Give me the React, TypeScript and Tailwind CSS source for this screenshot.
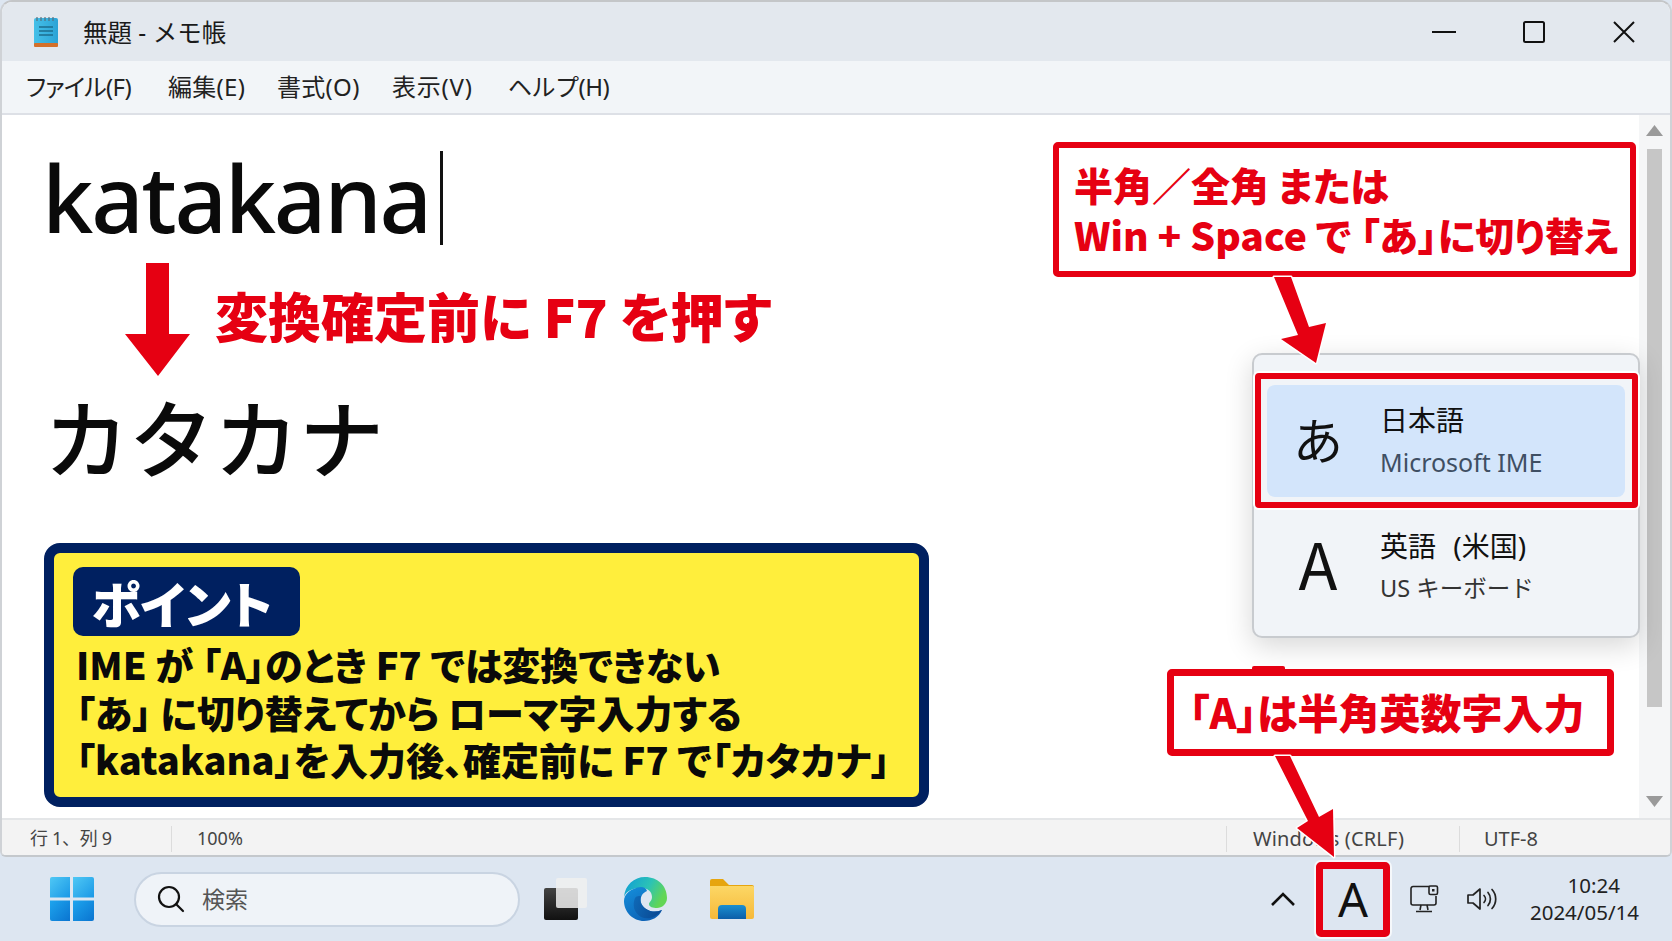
import React from "react";

const JP = "font-['Noto_Sans','Noto_Sans_CJK_JP',sans-serif]";
const HEAVY = "font-['Noto_Sans_CJK_JP','Noto_Sans',sans-serif] font-black [font-feature-settings:'palt']";

function NotepadIcon() {
  return (
    <svg width="26" height="32" viewBox="0 0 26 32">
      <defs>
        <linearGradient id="np" x1="0" y1="0" x2="1" y2="0">
          <stop offset="0" stopColor="#45c0e8" />
          <stop offset="1" stopColor="#2ba3d6" />
        </linearGradient>
      </defs>
      <rect x="1" y="2" width="24" height="28" rx="2" fill="url(#np)" />
      <rect x="1" y="27" width="24" height="4" rx="1" fill="#d4702a" />
      <path d="M4 1v4M8 1v4M12 1v4M16 1v4M20 1v4" stroke="#55707f" strokeWidth="1.2" />
      <path d="M6 11h14M6 15h14M6 19h14" stroke="#1c6d8f" strokeWidth="1.6" />
    </svg>
  );
}

function WinLogo() {
  return (
    <svg width="44" height="44" viewBox="0 0 44 44">
      <defs>
        <linearGradient id="w1" x1="0" y1="0" x2="1" y2="1">
          <stop offset="0" stopColor="#4fc8f5" />
          <stop offset="1" stopColor="#1a98e6" />
        </linearGradient>
        <linearGradient id="w2" x1="0" y1="0" x2="1" y2="1">
          <stop offset="0" stopColor="#1ea5ee" />
          <stop offset="1" stopColor="#0a74d0" />
        </linearGradient>
      </defs>
      <path d="M2 0h18v20.500H0V2a2 2 0 0 1 2-2z" fill="url(#w1)" />
      <path d="M23 0h19a2 2 0 0 1 2 2v18.500H23z" fill="url(#w1)" />
      <path d="M0 23.500h20V44H2a2 2 0 0 1-2-2z" fill="url(#w2)" />
      <path d="M23 23.500h21V42a2 2 0 0 1-2 2H23z" fill="url(#w2)" />
    </svg>
  );
}

function EdgeLogo() {
  return (
    <svg width="46" height="46" viewBox="0 0 46 46">
      <defs>
        <linearGradient id="e1" x1="0" y1="0" x2="1" y2="0.4">
          <stop offset="0" stopColor="#0d9bd9" />
          <stop offset="0.6" stopColor="#2cc3b5" />
          <stop offset="1" stopColor="#62d655" />
        </linearGradient>
        <linearGradient id="e2" x1="0" y1="0" x2="0.7" y2="1">
          <stop offset="0" stopColor="#1590dc" />
          <stop offset="1" stopColor="#0c5fb3" />
        </linearGradient>
        <linearGradient id="e3" x1="0" y1="0" x2="1" y2="0.3">
          <stop offset="0" stopColor="#0f6ab8" />
          <stop offset="1" stopColor="#0a4a94" />
        </linearGradient>
      </defs>
      <path d="M2 21C3 9 12 1 23 1c13 0 22 9 22 21 0 6-5 10-10 10-4 0-8-1-8-4 0-2 3-3 3-7 0-6-5-9-11-9-8 0-15 3-17 9z" fill="url(#e1)" />
      <path d="M19 11C9 12 2 18 2 25c0 11 9 20 20 20 8 0 15-4 18-11-5 2-10 2-14 0-7-3-9-10-6-15 1-2 3-3 5-4-1-3-3-4-6-4z" fill="url(#e2)" />
      <path d="M13 22c-3 7-1 15 6 19 7 3 15 1 21-7-5 2-10 2-14 0-6-3-9-8-7-14-2 0-5 0-6 2z" fill="url(#e3)" />
    </svg>
  );
}

function FolderIcon() {
  return (
    <svg width="46" height="42" viewBox="0 0 46 42">
      <defs>
        <linearGradient id="f1" x1="0" y1="0" x2="0" y2="1">
          <stop offset="0" stopColor="#fcd765" />
          <stop offset="1" stopColor="#f6b93a" />
        </linearGradient>
        <linearGradient id="f2" x1="0" y1="0" x2="0" y2="1">
          <stop offset="0" stopColor="#1a8fd0" />
          <stop offset="1" stopColor="#0c5ea8" />
        </linearGradient>
      </defs>
      <path d="M1 3a2 2 0 0 1 2-2h11l6 6h23a2 2 0 0 1 2 2v4H1z" fill="#e6a50f" />
      <path d="M1 8h43a2 2 0 0 1 1 1v30a2 2 0 0 1-2 2H3a2 2 0 0 1-2-2z" fill="url(#f1)" />
      <path d="M9 41V31a4 4 0 0 1 4-4h20a4 4 0 0 1 4 4v10z" fill="url(#f2)" />
    </svg>
  );
}

function NetworkIcon() {
  return (
    <svg width="30" height="28" viewBox="0 0 30 28" fill="none" stroke="#222" strokeWidth="1.600">
      <path d="M21 1.500H4a2 2 0 0 0-2 2V18a2 2 0 0 0 2 2h21a2 2 0 0 0 2-2v-7" />
      <path d="M12 20l-1 5M18 20l1 5M7 26.500h16" />
      <rect x="20" y="1" width="8.500" height="8.500" rx="1.500" fill="#dfe7f1" />
      <rect x="23" y="4" width="2.500" height="2.500" fill="#222" stroke="none" />
    </svg>
  );
}

function VolumeIcon() {
  return (
    <svg width="31" height="24" viewBox="0 0 31 24" fill="none" stroke="#222" strokeWidth="1.700" strokeLinecap="round" strokeLinejoin="round">
      <path d="M2 8v8h5l7 6V2L7 8z" />
      <path d="M18 8.500a5 5 0 0 1 0 7M22 5.500a10 10 0 0 1 0 13M26 2.500a14 14 0 0 1 0 19" />
    </svg>
  );
}

function MenuItem({ label, w }: { label: React.ReactNode; w: string }) {
  return <span className={`${w} whitespace-nowrap`}>{label}</span>;
}

function ImeRow({ glyph, glyphClass, title, titleClass, sub, subClass, active }: { glyph: string; glyphClass: string; title: string; titleClass?: string; sub: string; subClass: string; active?: boolean }) {
  return (
    <div className={`flex h-[112px] items-center rounded-lg ${active ? "bg-[#d3e5fb]" : ""}`}>
      <span className={`mr-[11px] w-[102px] text-center leading-none text-[#111] font-['Noto_Sans_CJK_JP','Noto_Sans',sans-serif] ${glyphClass}`}>{glyph}</span>
      <div className="-mt-[2px] flex flex-col">
        <span className={`text-[28px] leading-[36px] text-[#111] ${JP} ${titleClass ?? ""}`}>{title}</span>
        <span className={`mt-[8px] leading-[32px] ${subClass} ${JP}`}>{sub}</span>
      </div>
    </div>
  );
}

export default function App() {
  return (
    <div className={`relative flex h-[941px] w-[1672px] flex-col overflow-hidden bg-[#dde6f1] ${JP}`}>
      {/* Window */}
      <div className="flex h-[857px] flex-col overflow-hidden rounded-t-xl rounded-b-md border-x-2 border-t-2 border-b-2 border-x-[#cfd2d6] border-t-[#c4c6c8] border-b-[#c4c8cc] bg-white">
        <div className="flex h-[59px] shrink-0 items-center bg-[#e3e8ee] pl-[31px]">
          <NotepadIcon />
          <span className="ml-[24px] pt-[3px] text-[24.500px] leading-none text-[#1a1a1a]">無題 - メモ帳</span>
          <div className="ml-auto flex items-center pr-[34px]">
            <svg width="26" height="4" viewBox="0 0 26 4"><path d="M1 2h24" stroke="#111" strokeWidth="2" /></svg>
            <svg className="ml-[65px]" width="24" height="24" viewBox="0 0 24 24" fill="none"><rect x="2" y="2" width="20" height="20" rx="1.500" stroke="#111" strokeWidth="2" /></svg>
            <svg className="ml-[66px]" width="24" height="24" viewBox="0 0 24 24" fill="none"><path d="M2 2l20 20M22 2L2 22" stroke="#111" strokeWidth="2" /></svg>
          </div>
        </div>
        <div className="flex h-[54px] shrink-0 items-center border-b-2 border-[#dde0e6] bg-[#f2f5f8] pl-[24px] text-[24px] text-[#222]">
          <MenuItem label={<><span className="tracking-[-0.8px] [font-feature-settings:'palt']">ファイル</span><span className="tracking-[-0.5px]">(F)</span></>} w="w-[142px]" />
          <MenuItem label="編集(E)" w="w-[109px] tracking-[0.3px]" />
          <MenuItem label="書式(O)" w="w-[115px] tracking-[0.3px]" />
          <MenuItem label="表示(V)" w="w-[116px] tracking-[0.8px]" />
          <MenuItem label="ヘルプ(H)" w="w-[110px] tracking-[-0.5px]" />
        </div>
        <div className="flex min-h-0 flex-1">
          <div className="flex min-w-0 flex-1 flex-col pl-[42px]">
            <div className="mt-[20px] flex h-[100px] items-start">
              <span className="-ml-[2px] mt-[13px] font-['Noto_Sans',sans-serif] text-[92px] font-medium leading-[100px] tracking-[-2.300px] text-[#0a0a0a]">katakana</span>
              <span className="ml-[10px] mt-[16px] h-[94px] w-[3px] bg-[#111]" />
            </div>
            <div className="mt-[50px] flex h-[60px] items-center pl-[171px]">
              <span className={`text-[53px] leading-none whitespace-nowrap text-[#e60012] ${HEAVY}`}>変換確定前に F7 を押す</span>
            </div>
            <div className="mt-[45px] h-[90px] text-[85px] leading-[90px] font-['Noto_Sans_CJK_JP',sans-serif] font-medium text-[#0a0a0a] whitespace-nowrap">カタカナ</div>
            <div className="mt-[63px] flex h-[264px] w-[885px] flex-col rounded-[16px] border-[10px] border-[#002060] bg-[#ffee3c] pl-[19px] pt-[14px]">
              <div className={`flex h-[69px] w-[227px] items-center justify-center rounded-[10px] bg-[#002060] pr-[9px] text-[50px] leading-none text-white ${HEAVY}`}>ポイント</div>
              <div className={`mt-[4px] pl-[3px] text-[38px] leading-[47.500px] whitespace-nowrap text-[#0a0a0a] ${HEAVY}`}>
                <div>IME が 「A」のとき F7 では変換できない</div>
                <div>「あ」 に切り替えてから ローマ字入力する</div>
                <div>「katakana」を入力後、確定前に F7 で「カタカナ」</div>
              </div>
            </div>
          </div>
          <div className="flex w-[31px] shrink-0 flex-col items-center bg-[#f5f6f7] pt-[10px]">
            <svg width="17" height="11" viewBox="0 0 17 11"><path d="M8.500 0L17 11H0z" fill="#9a9a9a" /></svg>
            <div className="mt-[13px] h-[558px] w-[15px] bg-[#c6c6c6]" />
            <svg className="mt-[89px]" width="17" height="11" viewBox="0 0 17 11"><path d="M0 0h17L8.500 11z" fill="#9a9a9a" /></svg>
          </div>
        </div>
        <div className="flex h-[37px] shrink-0 items-center border-t-2 border-[#e4e6e8] bg-[#f3f3f3] pt-[2px] text-[#444]">
          <span className="w-[169px] pl-[28px] text-[18px] tracking-[-0.3px]">行 1、列 9</span>
          <span className="h-[26px] w-px bg-[#dcdcdc]" />
          <span className="pl-[25px] text-[18px]">100%</span>
          <span className="ml-auto h-[26px] w-px bg-[#dcdcdc]" />
          <span className="w-[232px] pl-[26px] text-[20px] tracking-[0.15px] whitespace-nowrap">Windows (CRLF)</span>
          <span className="h-[26px] w-px bg-[#dcdcdc]" />
          <span className="w-[210px] pl-[24px] text-[20px]">UTF-8</span>
        </div>
      </div>

      {/* Taskbar */}
      <div className="flex min-h-0 flex-1 items-center bg-[#dde6f1] pl-[50px]">
        <WinLogo />
        <div className="ml-[40px] flex h-[55px] w-[386px] items-center rounded-full border-2 border-[#c9d4e2] bg-[#eff3f8] pl-[21px]">
          <svg width="28" height="28" viewBox="0 0 28 28" fill="none" stroke="#111" strokeWidth="2.200" strokeLinecap="round">
            <circle cx="12" cy="12" r="10" />
            <path d="M19 19l7 7" />
          </svg>
          <span className="ml-[17px] text-[23px] leading-none text-[#555]">検索</span>
        </div>
        <div className="relative ml-[24px] h-[42px] w-[44px]">
          <div className="absolute left-0 top-[10px] h-[32px] w-[34px] rounded-[2px] bg-gradient-to-b from-[#444] to-[#111]" />
          <div className="absolute left-[12px] top-0 h-[30px] w-[31px] rounded-[2px] bg-[#f0f0f0]/85" />
        </div>
        <div className="ml-[34px]"><EdgeLogo /></div>
        <div className="ml-[41px]"><FolderIcon /></div>

        <div className="ml-auto flex items-center pr-[33px]">
          <svg width="26" height="16" viewBox="0 0 26 16" fill="none"><path d="M2 14L13 3l11 11" stroke="#111" strokeWidth="2.600" /></svg>
          <div className="ml-[20px] flex h-[75px] w-[74px] items-center justify-center rounded-[5px] border-[7px] border-[#e60012] text-[47px] leading-none text-[#111] shadow-[0_0_0_2px_#f5f8fb]">A</div>
          <div className="ml-[19px]"><NetworkIcon /></div>
          <div className="ml-[27px]"><VolumeIcon /></div>
          <div className="ml-[30px] flex w-[112px] flex-col items-end text-[20.500px] leading-[27px] text-[#222]">
            <span className="pr-[19px]">10:24</span>
            <span>2024/05/14</span>
          </div>
        </div>
      </div>

      {/* Language popup */}
      <div className="absolute left-[1252px] top-[353px] h-[285px] w-[388px] rounded-[10px] border-2 border-[#c8cbcf] bg-[#f1f4f8] px-[13px] pt-[30px] shadow-[0_8px_28px_rgba(0,0,0,0.16)]">
        <ImeRow glyph="あ" glyphClass="text-[50px] -mt-[6px]" title="日本語" sub="Microsoft IME" subClass="text-[25px] text-[#3f4f63]" active />
        <div className="mt-[14px]">
          <ImeRow glyph="A" glyphClass="text-[64px] -mt-[10px]" title="英語 (米国)" titleClass="[word-spacing:10px]" sub="US キーボード" subClass="text-[23.500px] text-[#333]" />
        </div>
      </div>
      <div className="absolute left-[1255px] top-[373px] h-[135px] w-[383px] rounded-[4px] border-[6px] border-[#e60012] shadow-[0_0_0_2px_#fff]" />

      {/* Callouts */}
      <div className={`absolute left-[1053px] top-[142px] flex h-[135px] w-[583px] flex-col justify-center rounded-[5px] border-[6px] border-[#e60012] bg-white pb-[2px] pl-[15px] leading-[50px] whitespace-nowrap text-[#e60012] text-[39px] ${HEAVY}`}>
        <div>半角／全角 または</div>
        <div>Win + Space で 「あ」に切り替え</div>
      </div>
      <div className={`absolute left-[1167px] top-[669px] flex h-[87px] w-[447px] items-center rounded-[5px] border-[7px] border-[#e60012] bg-white pb-[2px] pl-[15px] text-[41px] leading-none whitespace-nowrap text-[#e60012] ${HEAVY}`}>
        「A」は半角英数字入力
      </div>

      {/* Arrows */}
      <svg className="pointer-events-none absolute left-0 top-0" width="1672" height="941" viewBox="0 0 1672 941">
        <path d="M146 263h23v71h21l-32 42-33-42h21z" fill="#e60012" />
        <rect x="1252" y="666" width="33" height="5" rx="2" fill="#e60012" />
        <path d="M1274 277H1291L1309 327L1326 323L1316 363L1281 339L1298 335Z" fill="#e60012" stroke="#fff" strokeWidth="3" strokeLinejoin="round" paintOrder="stroke" />
        <path d="M1275 756H1290L1319 817L1333 809L1334 857L1297 828L1308 821Z" fill="#e60012" stroke="#fff" strokeWidth="3" strokeLinejoin="round" paintOrder="stroke" />
      </svg>
    </div>
  );
}
